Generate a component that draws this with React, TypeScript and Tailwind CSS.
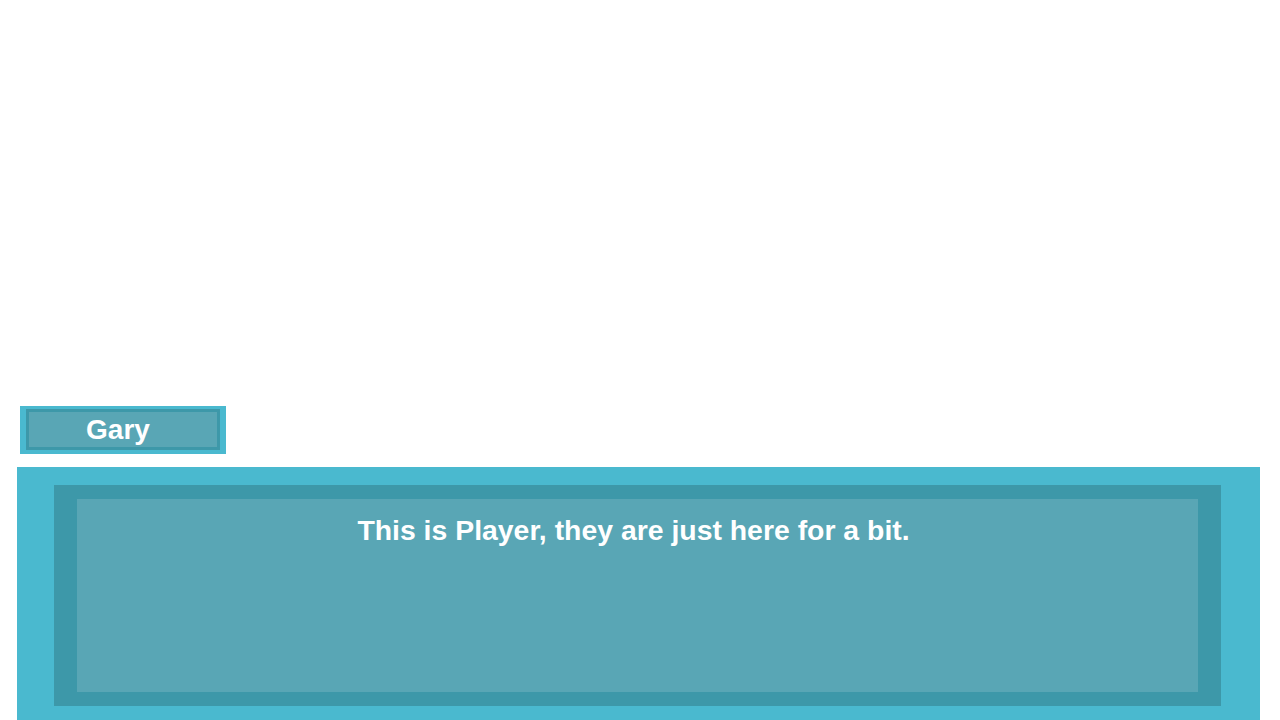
export default function App() {
  return (
    <div
      className="w-[1280px] h-[720px] bg-white flex flex-col justify-end overflow-hidden"
      style={{ fontFamily: '"Liberation Sans", "Noto Sans CJK JP", sans-serif' }}
    >
      {/* name plate */}
      <div className="ml-[20px] w-[206px] h-[48px] bg-[#4ab9cf] pt-[3px] pb-[4px] px-[6px]">
        <div className="h-full border-[3px] border-[#3d98a9] bg-[#59a6b5] flex items-center justify-center pr-[10px]">
          <span className="text-white font-bold text-[28px] leading-none">Gary</span>
        </div>
      </div>

      {/* dialogue box */}
      <div className="mt-[13px] ml-[17px] w-[1243px] h-[253px] bg-[#4ab9cf] pt-[18px] pl-[37px] pr-[39px] pb-[14px]">
        <div className="h-[221px] bg-[#3d98a9] px-[23px] py-[14px]">
          <div className="h-full bg-[#59a6b5] pt-[14px] flex justify-center">
            <p className="text-white font-bold text-[28.4px] leading-[34px] pr-[8px]">
              This is Player, they are just here for a bit.
            </p>
          </div>
        </div>
      </div>
    </div>
  );
}
